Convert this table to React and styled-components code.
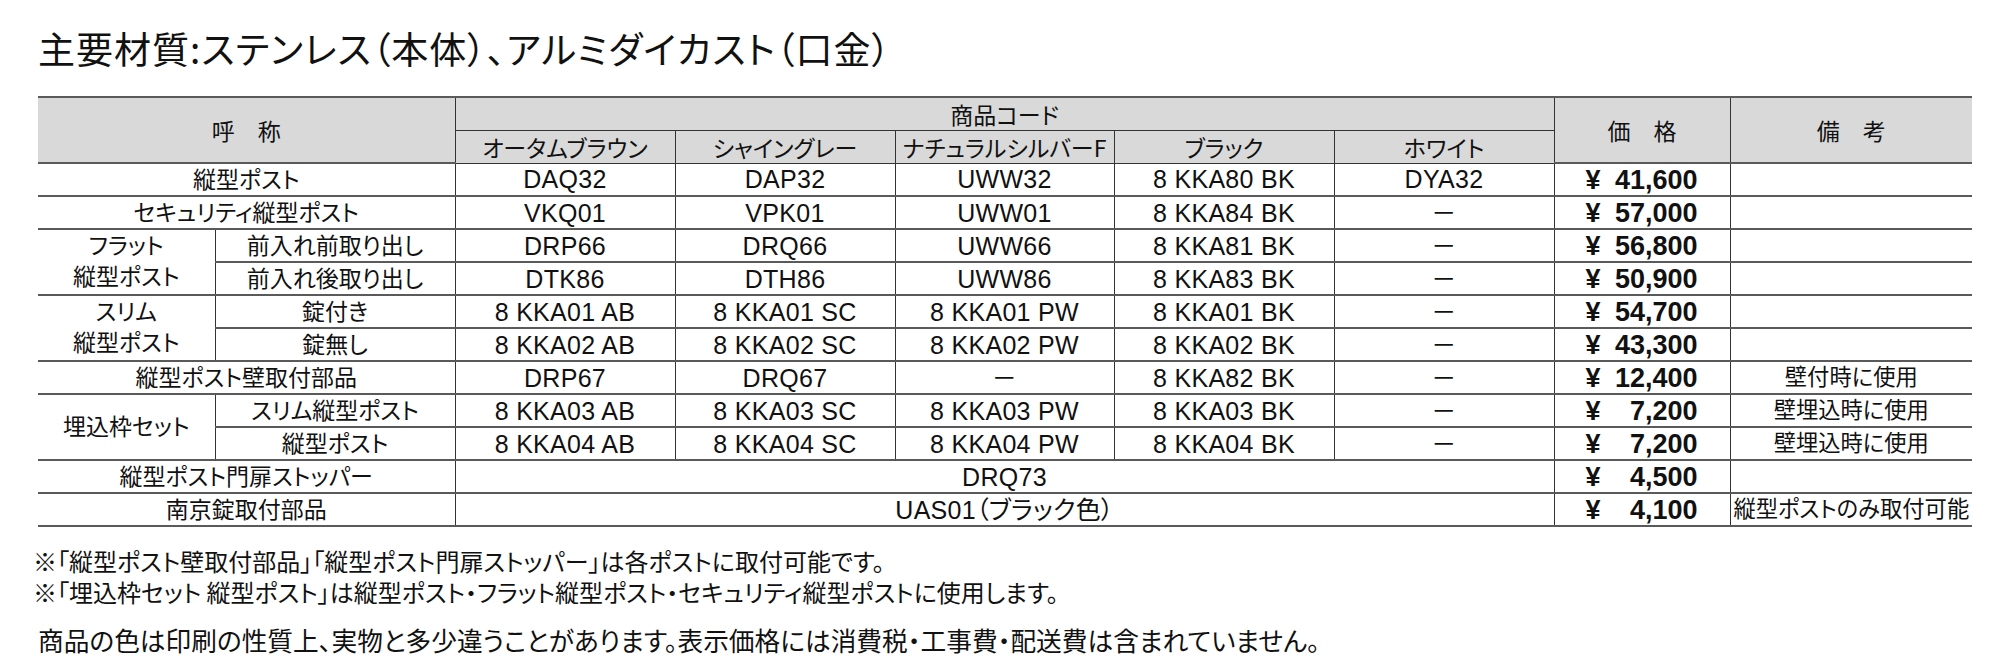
import React from 'react';
import styled, { createGlobalStyle } from 'styled-components';

const colors = ['オータムブラウン', 'シャイングレー', 'ナチュラルシルバーF', 'ブラック', 'ホワイト'];

const rows = [
  { name: '縦型ポスト', codes: ['DAQ32', 'DAP32', 'UWW32', '8 KKA80 BK', 'DYA32'], price: '41,600' },
  { name: 'セキュリティ縦型ポスト', codes: ['VKQ01', 'VPK01', 'UWW01', '8 KKA84 BK', '－'], price: '57,000' },
  { group: ['フラット', '縦型ポスト'], span: 2, sub: '前入れ前取り出し', codes: ['DRP66', 'DRQ66', 'UWW66', '8 KKA81 BK', '－'], price: '56,800' },
  { sub: '前入れ後取り出し', codes: ['DTK86', 'DTH86', 'UWW86', '8 KKA83 BK', '－'], price: '50,900' },
  { group: ['スリム', '縦型ポスト'], span: 2, sub: '錠付き', codes: ['8 KKA01 AB', '8 KKA01 SC', '8 KKA01 PW', '8 KKA01 BK', '－'], price: '54,700' },
  { sub: '錠無し', codes: ['8 KKA02 AB', '8 KKA02 SC', '8 KKA02 PW', '8 KKA02 BK', '－'], price: '43,300' },
  { name: '縦型ポスト壁取付部品', codes: ['DRP67', 'DRQ67', '－', '8 KKA82 BK', '－'], price: '12,400', note: '壁付時に使用' },
  { group: ['埋込枠セット'], span: 2, sub: 'スリム縦型ポスト', codes: ['8 KKA03 AB', '8 KKA03 SC', '8 KKA03 PW', '8 KKA03 BK', '－'], price: '7,200', note: '壁埋込時に使用' },
  { sub: '縦型ポスト', codes: ['8 KKA04 AB', '8 KKA04 SC', '8 KKA04 PW', '8 KKA04 BK', '－'], price: '7,200', note: '壁埋込時に使用' },
  { name: '縦型ポスト門扉ストッパー', merged: 'DRQ73', price: '4,500' },
  { name: '南京錠取付部品', merged: 'UAS01（ブラック色）', price: '4,100', note: '縦型ポストのみ取付可能' },
];

const App = () => (
  <Page>
    <GlobalStyle />
    <Title>主要材質:ステンレス（本体）、アルミダイカスト（口金）</Title>

    <Table>
      <colgroup>
        <col style={{ width: 177 }} />
        <col style={{ width: 240 }} />
        <col style={{ width: 220 }} />
        <col style={{ width: 220 }} />
        <col style={{ width: 219 }} />
        <col style={{ width: 220 }} />
        <col style={{ width: 220 }} />
        <col style={{ width: 176 }} />
        <col style={{ width: 242 }} />
      </colgroup>
      <thead>
        <HeadRow>
          <Th colSpan={2} rowSpan={2}>呼　称</Th>
          <Th colSpan={5} $sub>商品コード</Th>
          <Th rowSpan={2}>価　格</Th>
          <Th rowSpan={2}>備　考</Th>
        </HeadRow>
        <HeadRow>
          {colors.map(c => (
            <Th key={c} $sub>{c}</Th>
          ))}
        </HeadRow>
      </thead>
      <tbody>
        {rows.map((r, i) => (
          <Row key={i}>
            {r.name && <Td colSpan={2}>{r.name}</Td>}
            {r.group && (
              <Td rowSpan={r.span}>
                <GroupLabel>
                  {r.group.map(g => (
                    <span key={g}>{g}</span>
                  ))}
                </GroupLabel>
              </Td>
            )}
            {r.sub && <Td>{r.sub}</Td>}
            {r.merged ? (
              <Td colSpan={5} $code>{r.merged}</Td>
            ) : (
              r.codes.map((c, j) => (
                <Td key={j} $code>{c}</Td>
              ))
            )}
            <Td>
              <Price>
                <span>¥</span>
                <span>{r.price}</span>
              </Price>
            </Td>
            <Td $note>{r.note}</Td>
          </Row>
        ))}
      </tbody>
    </Table>

    <Notes>
      <Note>※「縦型ポスト壁取付部品」「縦型ポスト門扉ストッパー」は各ポストに取付可能です。</Note>
      <Note>※「埋込枠セット 縦型ポスト」は縦型ポスト・フラット縦型ポスト・セキュリティ縦型ポストに使用します。</Note>
    </Notes>
    <Disclaimer>
      商品の色は印刷の性質上、実物と多少違うことがあります。表示価格には消費税・工事費・配送費は含まれていません。
    </Disclaimer>
  </Page>
);

const GlobalStyle = createGlobalStyle`
  body {
    margin: 0;
    background: #fff;
    color: #111;
    font-family: "Liberation Sans", "Noto Sans CJK JP", sans-serif;
  }
`;

const Page = styled.div`
  width: 1999px;
  padding: 28px 0 0 38px;
  box-sizing: border-box;
`;

const Title = styled.h1`
  margin: 0 0 28px;
  font-family: "Noto Sans CJK JP", sans-serif;
  font-feature-settings: "palt";
  font-weight: 400;
  font-size: 37px;
  letter-spacing: 1px;
  line-height: 40px;
  color: #111;
`;

const Table = styled.table`
  border-collapse: collapse;
  table-layout: fixed;
  width: 1934px;
  border-top: 2px solid #5a5a5a;
  border-bottom: 2px solid #5a5a5a;
`;

const HeadRow = styled.tr`
  height: 33px;
  background: #d9d9d9;
`;

const Th = styled.th`
  padding: 0;
  font-family: "Noto Sans CJK JP", sans-serif;
  font-feature-settings: "palt";
  font-weight: 400;
  font-size: 23px;
  line-height: 28px;
  text-align: center;
  white-space: nowrap;
  border-left: 1px solid #333;
  border-right: 1px solid #333;
  border-bottom: ${p => (p.$sub ? '1px solid #333' : '2px solid #5a5a5a')};
  &:first-child {
    border-left: none;
  }
  &:last-child {
    border-right: none;
  }
`;

const Row = styled.tr`
  height: 33px;
`;

const Td = styled.td`
  padding: 0;
  text-align: center;
  white-space: nowrap;
  font-size: ${p => (p.$code ? '25px' : '23px')};
  letter-spacing: ${p => (p.$code ? '0.3px' : '0')};
  font-feature-settings: "palt";
  line-height: 28px;
  border-bottom: 2px solid #5a5a5a;
  border-left: 1px solid #333;
  border-right: 1px solid #333;
  &:first-child {
    border-left: none;
  }
  &:last-child {
    border-right: none;
  }
  ${p => p.$note && 'font-size: 22.3px;'}
`;

const GroupLabel = styled.div`
  display: flex;
  flex-direction: column;
  align-items: center;
  line-height: 31px;
`;

const Price = styled.div`
  display: flex;
  justify-content: space-between;
  padding: 0 32px 0 31px;
  font-family: "Liberation Sans", sans-serif;
  font-weight: 700;
  font-size: 27px;
  line-height: 28px;
`;

const Notes = styled.div`
  margin-top: 18px;
  margin-left: -5px;
`;

const Note = styled.p`
  margin: 0;
  font-family: "Noto Sans CJK JP", sans-serif;
  font-feature-settings: "palt";
  font-size: 24px;
  line-height: 31px;
`;

const Disclaimer = styled.p`
  margin: 18px 0 0;
  font-family: "Noto Sans CJK JP", sans-serif;
  font-feature-settings: "palt";
  font-size: 25.7px;
  line-height: 30px;
`;

export default App;
